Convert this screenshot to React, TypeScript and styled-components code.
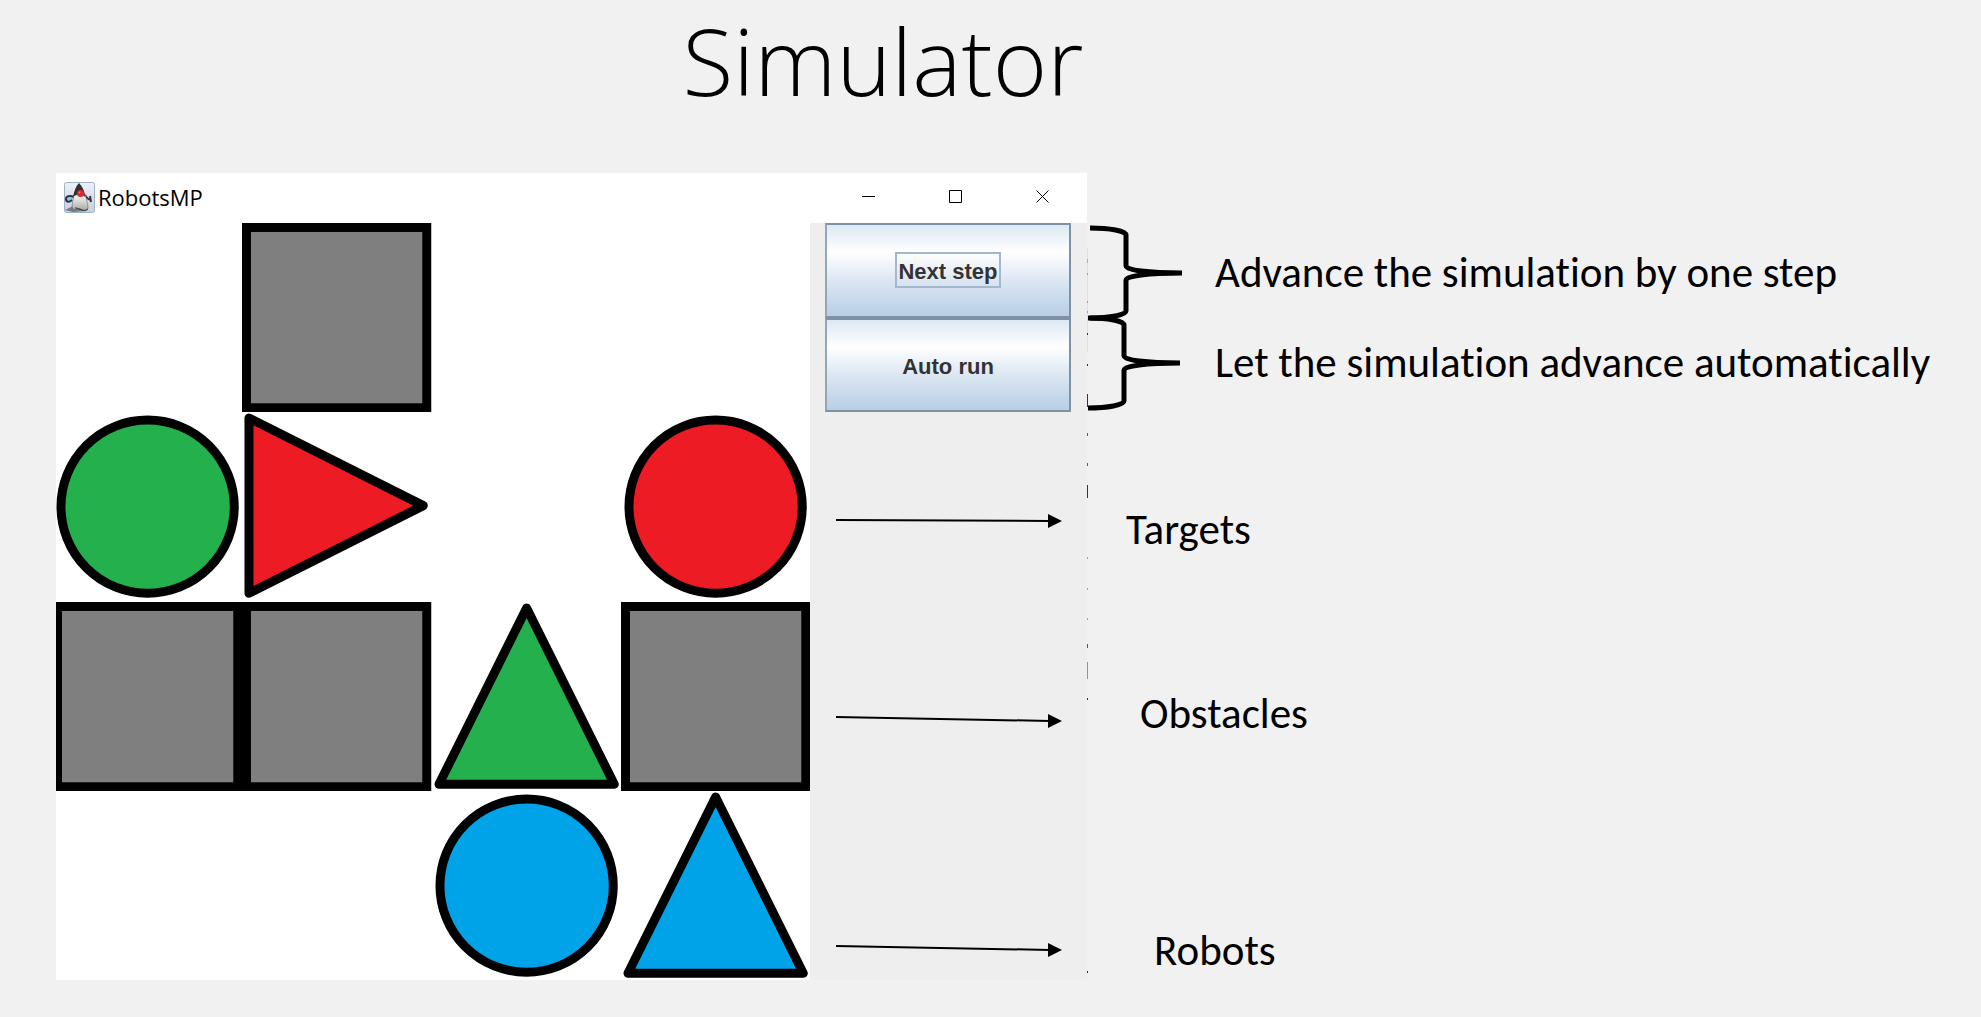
import React from "react";
import styled, { createGlobalStyle } from "styled-components";

const GlobalStyle = createGlobalStyle`
  * { box-sizing: border-box; }
  body {
    margin: 0;
    background: #f1f1f1;
    color: #000;
    font-family: Carlito, Calibri, Lato, sans-serif;
    font-variant-ligatures: none;
  }
`;

const Slide = styled.main`
  min-height: 100vh;
  padding-left: 56px;
`;

const Title = styled.h1`
  margin: 0;
  padding: 4px 215px 57px 0;
  margin-left: -56px;
  font-family: "Open Sans", Carlito, sans-serif;
  font-size: 93px;
  line-height: 112px;
  font-weight: 300;
  text-align: center;
`;

const Stage = styled.div`
  display: grid;
  grid-template-columns: minmax(0, 1031fr) minmax(0, 894fr);
`;

const AppWindow = styled.section`
  position: relative;
  background: #fff;
`;

const TitleBar = styled.header`
  display: flex;
  align-items: flex-start;
  justify-content: space-between;
  height: 50px;
  padding-right: 1px;
`;

const AppName = styled.div`
  display: flex;
  align-items: center;
  gap: 3px;
  height: 48px;
  padding-left: 8px;
  font-family: "Open Sans", "Noto Sans", sans-serif;
  font-size: 22px;
  line-height: 30px;
`;

const WindowControls = styled.div`
  display: flex;
`;

const ControlButton = styled.button`
  display: grid;
  place-items: center;
  width: 87px;
  height: 47px;
  padding: 0;
  border: 0;
  background: transparent;
`;

const Content = styled.div`
  display: grid;
  grid-template-columns: minmax(0, 1fr) 277px;
`;

const BoardClip = styled.div`
  overflow: hidden;
`;

const Board = styled.div`
  display: grid;
  grid-template-columns: repeat(4, minmax(0, 1fr));
  margin-left: -3px;
`;

const Piece = styled.svg`
  display: block;
  width: 100%;
`;

const SidePanel = styled.aside`
  display: grid;
  grid-template-rows: repeat(4, minmax(0, 1fr));
  padding: 0 16px 0 15px;
  background: #eee;
`;

const ButtonStack = styled.div`
  display: grid;
  grid-template-rows: 1fr 1fr;
`;

const StepButton = styled.button`
  display: grid;
  place-items: center;
  padding: 0;
  border: 2px solid #7f92a5;
  border-left-color: #93a6b9;
  background: linear-gradient(#dde8f3 0%, #fff 30%, #dbe6f2 62%, #b8cfe5 100%);
  color: #333;
  font: bold 22px/28px "Liberation Sans", Arial, sans-serif;
`;

const ButtonText = styled.span<{ $focused?: boolean }>`
  padding: 4px 1px 0;
  border: 2px solid ${(p) => (p.$focused ? "#a3b8cc" : "transparent")};
`;

const ArrowCell = styled.div<{ $top: number }>`
  padding: ${(p) => p.$top}px 0 0 9px;
`;

const Drawing = styled.svg`
  display: block;
  overflow: visible;
  flex: none;
`;

const EdgeTicks = styled.svg`
  position: absolute;
  top: 0;
  left: 100%;
`;

const Notes = styled.div`
  display: grid;
  grid-template-rows: repeat(4, minmax(0, 1fr));
  padding-top: 50px;
`;

const BraceNotes = styled.div`
  display: grid;
  grid-template-rows: 1fr 1fr;
`;

const BraceNote = styled.div<{ $align: string; $inset: number }>`
  display: flex;
  align-items: ${(p) => p.$align};
  padding-left: ${(p) => p.$inset}px;
`;

const BraceRow = styled.div`
  display: flex;
  align-items: center;
`;

const Label = styled.p<{ $left: number; $top?: number }>`
  margin: 0;
  padding: ${(p) => p.$top ?? 0}px 0 0 ${(p) => p.$left}px;
  font-size: 43px;
  line-height: 52px;
  white-space: nowrap;
`;

type Shape = "square" | "circle" | "up" | "right";
const GREEN = "#24b14d";
const RED = "#ed1c24";
const BLUE = "#00a2e8";
const GRAY = "#7f7f7f";

const cells: ([Shape, string] | null)[] = [
  null, ["square", GRAY], null, null,
  ["circle", GREEN], ["right", RED], null, ["circle", RED],
  ["square", GRAY], ["square", GRAY], ["up", GREEN], ["square", GRAY],
  null, null, ["circle", BLUE], ["up", BLUE],
];

function Cell({ piece }: { piece: [Shape, string] | null }) {
  const common = { fill: piece?.[1], stroke: "#000", strokeWidth: 9, strokeLinejoin: "round" as const };
  return (
    <Piece viewBox="0 0 190 190" aria-hidden="true">
      {piece?.[0] === "square" && <rect x="4.500" y="4.500" width="181" height="181" {...common} strokeLinejoin="miter" />}
      {piece?.[0] === "circle" && <circle cx="95" cy="95" r="87" {...common} />}
      {piece?.[0] === "up" && <path d="M95 6 L183 183 H7 Z" {...common} />}
      {piece?.[0] === "right" && <path d="M7 6 V182 L182 94 Z" {...common} />}
    </Piece>
  );
}

function Duke() {
  return (
    <Drawing width="31" height="31" viewBox="0 0 31 31" aria-hidden="true">
      <defs>
        <linearGradient id="tile" x1="0" y1="0" x2="0" y2="1">
          <stop offset="0" stopColor="#eef1f8" />
          <stop offset="1" stopColor="#c9cddd" />
        </linearGradient>
        <linearGradient id="body" x1="0" y1="0" x2="0" y2="1">
          <stop offset="0" stopColor="#fff" />
          <stop offset="1" stopColor="#a5a5a2" />
        </linearGradient>
      </defs>
      <rect x="0.5" y="0.5" width="30" height="30" rx="2" fill="url(#tile)" stroke="#9db3c7" />
      <path d="M1 28 L9 24 L22 29 L9 30 Z" fill="#777b85" />
      <path d="M10 15 C6 13 2 14 2 17 C2 20 5 21 8 18" fill="#8cc7e8" stroke="#30343a" strokeWidth="2" />
      <path d="M21 13 C23 16 24 18 27 18 M26 14 L27 20" fill="none" stroke="#33363c" strokeWidth="2" />
      <path d="M10 13 C9 19 7 25 9 27 C11 29 14 26 17 27 C19 30 23 29 24 26 C24 21 22 17 21 12 Z" fill="url(#body)" stroke="#555" strokeWidth="0.5" />
      <path d="M9 15 C10 9 12 4 15 1 C19 5 21 10 21 15 C17 11 13 12 9 15 Z" fill="#30322f" />
      <path d="M11 26 C14 26 15 27 18 28 C21 29 23 28 24 27" fill="none" stroke="#333" strokeWidth="1" />
      <circle cx="16.500" cy="11.500" r="3.500" fill="#e0262b" />
      <circle cx="15.500" cy="10.500" r="1" fill="#f77" />
    </Drawing>
  );
}

function Arrow({ drop }: { drop: number }) {
  return (
    <Drawing width="228" height="14" viewBox="0 0 228 14" aria-hidden="true">
      <path d={`M2 ${7 - drop} L216 7`} stroke="#000" strokeWidth="2" />
      <path d="M214 0 L228 7 L214 14 Z" />
    </Drawing>
  );
}

function Brace() {
  return (
    <Drawing width="92" height="90" viewBox="0 0 92 90" aria-hidden="true">
      <path
        d="M0 0 C20 0 36 3 36 7 V38 C36 42 58 45 92 45 C58 45 36 48 36 52 V83 C36 87 20 90 0 90"
        fill="none" stroke="#000" strokeWidth="5" strokeLinejoin="bevel"
      />
    </Drawing>
  );
}

const ticks: [number, number, string][] = [
  [86, 4, "#8fb9d6"], [100, 2, "#a89c8c"], [128, 2, "#8f9fc4"], [138, 2, "#8fa4be"],
  [160, 2, "#1c1cc0"], [191, 2, "#1c1cc0"], [221, 13, "#7a0a55"], [260, 3, "#6a3cc0"],
  [290, 3, "#6a3cc0"], [312, 13, "#7a0a55"], [384, 2, "#c49a6c"], [415, 2, "#c49a6c"],
  [445, 2, "#c49a6c"], [471, 4, "#7a4a20"], [489, 17, "#b07cc8"], [525, 2, "#2a1cc0"], [798, 2, "#1c1c9c"],
];

export default function App() {
  return (
    <>
      <GlobalStyle />
      <Slide>
        <Title>Simulator</Title>
        <Stage>
          <AppWindow aria-label="RobotsMP">
            <TitleBar>
              <AppName><Duke />RobotsMP</AppName>
              <WindowControls>
                <ControlButton aria-label="Minimize">
                  <Drawing width="13" height="13" viewBox="0 0 13 13"><path d="M0 6.500 H13" stroke="#000" /></Drawing>
                </ControlButton>
                <ControlButton aria-label="Maximize">
                  <Drawing width="13" height="13" viewBox="0 0 13 13"><path d="M.5 .5 H12.500 V12.500 H.5 Z" fill="none" stroke="#000" /></Drawing>
                </ControlButton>
                <ControlButton aria-label="Close">
                  <Drawing width="13" height="13" viewBox="0 0 13 13"><path d="M.5 .5 L12.500 12.500 M12.500 .5 L.5 12.500" stroke="#000" /></Drawing>
                </ControlButton>
              </WindowControls>
            </TitleBar>
            <Content>
              <BoardClip>
                <Board>{cells.map((piece, i) => <Cell key={i} piece={piece} />)}</Board>
              </BoardClip>
              <SidePanel>
                <ButtonStack>
                  <StepButton><ButtonText $focused>Next step</ButtonText></StepButton>
                  <StepButton><ButtonText>Auto run</ButtonText></StepButton>
                </ButtonStack>
                <ArrowCell $top={102}><Arrow drop={1} /></ArrowCell>
                <ArrowCell $top={112}><Arrow drop={4} /></ArrowCell>
                <ArrowCell $top={152}><Arrow drop={4} /></ArrowCell>
              </SidePanel>
            </Content>
            <EdgeTicks width="1" height="807" aria-hidden="true">
              <rect y="75" width="1" height="104" fill="#d9e2ec" />
              {ticks.map(([y, h, c]) => <rect key={y} y={y} width="1" height={h} fill={c} />)}
            </EdgeTicks>
          </AppWindow>
          <Notes>
            <BraceNotes>
              <BraceNote $align="flex-end" $inset={3}>
                <BraceRow>
                  <Brace />
                  <Label $left={33}>Advance the simulation by one step</Label>
                </BraceRow>
              </BraceNote>
              <BraceNote $align="flex-start" $inset={1}>
                <BraceRow>
                  <Brace />
                  <Label $left={35}>Let the simulation advance automatically</Label>
                </BraceRow>
              </BraceNote>
            </BraceNotes>
            <Label $left={39} $top={92}>Targets</Label>
            <Label $left={53} $top={86}>Obstacles</Label>
            <Label $left={67} $top={134}>Robots</Label>
          </Notes>
        </Stage>
      </Slide>
    </>
  );
}
